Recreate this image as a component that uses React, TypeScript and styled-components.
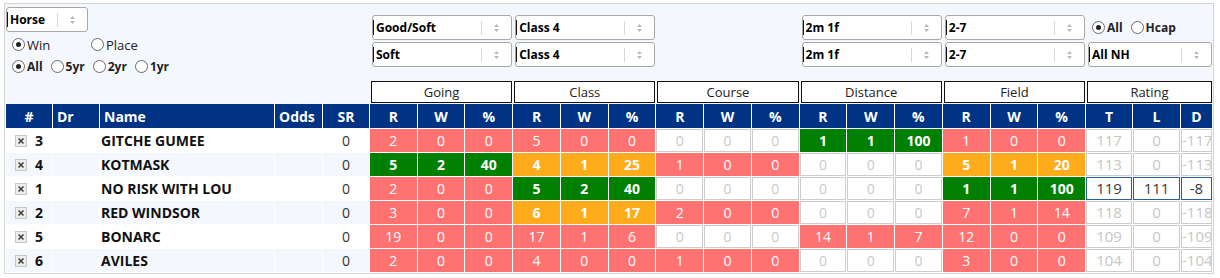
import React from 'react'
import styled, { createGlobalStyle } from 'styled-components'

type Tone = 'red' | 'green' | 'orange' | 'empty'

const GlobalStyle = createGlobalStyle`
  body {
    margin: 0;
    background: #fff;
    font-family: "Open Sans", "Liberation Sans", sans-serif;
  }
`

// shared by the filter strip and the table so the columns line up
const COLS = '46px 46px 174px 47px 46px repeat(15, 1fr) 46px 47px 31px'

const toneBg: Record<Tone, string> = {
  red: '#ff7272',
  green: '#008000',
  orange: '#ffac1c',
  empty: '#ffffff',
}

const toneOf = (r: number, p: number): Tone => {
  if (r === 0) return 'empty'
  if (p >= 40) return 'green'
  if (p >= 15) return 'orange'
  return 'red'
}

const groups = [
  { label: 'Going', col: '6 / 9', top: 'Good/Soft', bottom: 'Soft' },
  { label: 'Class', col: '9 / 12', top: 'Class 4', bottom: 'Class 4' },
  { label: 'Course', col: '12 / 15' },
  { label: 'Distance', col: '15 / 18', top: '2m 1f', bottom: '2m 1f' },
  { label: 'Field', col: '18 / 21', top: '2-7', bottom: '2-7' },
  { label: 'Rating', col: '21 / 24' },
]

const runners = [
  { no: 3, name: 'GITCHE GUMEE', sr: 0, stats: [[2, 0, 0], [5, 0, 0], [0, 0, 0], [1, 1, 100], [1, 0, 0]], rating: [117, 0, -117], active: false },
  { no: 4, name: 'KOTMASK', sr: 0, stats: [[5, 2, 40], [4, 1, 25], [1, 0, 0], [0, 0, 0], [5, 1, 20]], rating: [113, 0, -113], active: false },
  { no: 1, name: 'NO RISK WITH LOU', sr: 0, stats: [[2, 0, 0], [5, 2, 40], [0, 0, 0], [0, 0, 0], [1, 1, 100]], rating: [119, 111, -8], active: true },
  { no: 2, name: 'RED WINDSOR', sr: 0, stats: [[3, 0, 0], [6, 1, 17], [2, 0, 0], [0, 0, 0], [7, 1, 14]], rating: [118, 0, -118], active: false },
  { no: 5, name: 'BONARC', sr: 0, stats: [[19, 0, 0], [17, 1, 6], [0, 0, 0], [14, 1, 7], [12, 0, 0]], rating: [109, 0, -109], active: false },
  { no: 6, name: 'AVILES', sr: 0, stats: [[2, 0, 0], [4, 0, 0], [1, 0, 0], [0, 0, 0], [3, 0, 0]], rating: [104, 0, -104], active: false },
]

const UpDown = () => (
  <svg width="7" height="10" viewBox="0 0 7 10">
    <path d="M1 4 L3.5 1 L6 4 Z M1 6 L3.5 9 L6 6 Z" fill="#b8b8b8" />
  </svg>
)

const CheckX = () => (
  <svg width="12" height="12" viewBox="0 0 12 12">
    <rect x="0.5" y="0.5" width="11" height="11" fill="#ececec" stroke="#c6c6c6" />
    <path d="M3.5 3.5 L8.5 8.5 M8.5 3.5 L3.5 8.5" stroke="#444" strokeWidth="1.6" />
  </svg>
)

const Select = ({ value }: { value: string }) => (
  <SelectBox>
    <SelectValue>{value}</SelectValue>
    <SelectIndicator>
      <UpDown />
    </SelectIndicator>
  </SelectBox>
)

const Radio = ({ label, on, bold, w }: { label: string; on?: boolean; bold?: boolean; w?: number }) => (
  <RadioOption $bold={bold} $w={w}>
    <RadioDot $on={on} />
    {label}
  </RadioOption>
)

const App = () => {
  return (
    <>
      <GlobalStyle />
      <Frame>
        <Filters>
          <LeftPanel>
            <HorseSelect>
              <SelectValue>Horse</SelectValue>
              <SelectIndicator>
                <UpDown />
              </SelectIndicator>
            </HorseSelect>
            <RadioRow $top={4} $gap={0}>
              <Radio label="Win" on w={79} />
              <Radio label="Place" />
            </RadioRow>
            <RadioRow $top={5} $gap={8}>
              <Radio label="All" on bold />
              <Radio label="5yr" bold />
              <Radio label="2yr" bold />
              <Radio label="1yr" bold />
            </RadioRow>
          </LeftPanel>

          {groups.map(g => (
            <React.Fragment key={g.label}>
              {g.top && (
                <Slot $col={g.col} $row={2}>
                  <Select value={g.top} />
                </Slot>
              )}
              {g.bottom && (
                <Slot $col={g.col} $row={4}>
                  <Select value={g.bottom} />
                </Slot>
              )}
              <GroupBox $col={g.col}>{g.label}</GroupBox>
            </React.Fragment>
          ))}

          <Slot $col="21 / 24" $row={2}>
            <RadioRow $top={0} $gap={8} $fill>
              <Radio label="All" on bold />
              <Radio label="Hcap" bold />
            </RadioRow>
          </Slot>
          <Slot $col="21 / 24" $row={4}>
            <Select value="All NH" />
          </Slot>
        </Filters>

        <Table>
          <HeadCell>#</HeadCell>
          <HeadCell $left>Dr</HeadCell>
          <HeadCell $left>Name</HeadCell>
          <HeadCell $left>Odds</HeadCell>
          <HeadCell>SR</HeadCell>
          {groups.slice(0, 5).map(g => (
            <React.Fragment key={g.label}>
              <HeadCell>R</HeadCell>
              <HeadCell>W</HeadCell>
              <HeadCell>%</HeadCell>
            </React.Fragment>
          ))}
          <HeadCell>T</HeadCell>
          <HeadCell>L</HeadCell>
          <HeadCell>D</HeadCell>

          {runners.map((r, i) => {
            const stripe = i % 2 === 1
            return (
              <React.Fragment key={r.no}>
                <InfoCell $stripe={stripe} $align="center">
                  <NoWrap>
                    <CheckX />
                    <b>{r.no}</b>
                  </NoWrap>
                </InfoCell>
                <InfoCell $stripe={stripe} />
                <InfoCell $stripe={stripe} $bold>
                  {r.name}
                </InfoCell>
                <InfoCell $stripe={stripe} />
                <InfoCell $stripe={stripe} $align="center" $muted>
                  {r.sr}
                </InfoCell>
                {r.stats.map((s, gi) => {
                  const tone = toneOf(s[0], s[2])
                  return s.map((v, k) => (
                    <StatCell key={`${gi}-${k}`} $tone={tone}>
                      {v}
                    </StatCell>
                  ))
                })}
                {r.rating.map((v, k) => (
                  <RatingCell key={k} $active={r.active}>
                    {v}
                  </RatingCell>
                ))}
              </React.Fragment>
            )
          })}
        </Table>
      </Frame>
    </>
  )
}

export default App

const Frame = styled.div`
  margin: 3px 0 0 4px;
  width: 1210px;
  box-sizing: border-box;
  border: 1px solid #d4d4d4;
  background: #f4f7fc;
`

const Filters = styled.div`
  display: grid;
  grid-template-columns: ${COLS};
  grid-template-rows: 11px 25px 2px 25px 14px 22px;
  column-gap: 1px;
  padding: 0 1px 1px;
`

const LeftPanel = styled.div`
  grid-column: 1 / 6;
  grid-row: 1 / 6;
  display: flex;
  flex-direction: column;
  align-items: flex-start;
  padding-top: 3px;
`

const Slot = styled.div<{ $col: string; $row: number }>`
  grid-column: ${p => p.$col};
  grid-row: ${p => p.$row};
  min-width: 0;
`

const SelectBox = styled.div`
  display: flex;
  align-items: center;
  height: 25px;
  box-sizing: border-box;
  margin-left: 2px;
  background: #fff;
  border: 1px solid #a8a8a8;
  border-radius: 3px;
`

const HorseSelect = styled(SelectBox)`
  width: 82px;
  margin-left: 0;
`

const SelectValue = styled.span`
  flex: 1;
  min-width: 0;
  border-left: 1px solid #111;
  padding-left: 2px;
  font-size: 12px;
  font-weight: 700;
  line-height: 15px;
  color: #000;
  white-space: nowrap;
  overflow: hidden;
`

const SelectIndicator = styled.span`
  flex: none;
  width: 29px;
  height: 14px;
  display: flex;
  align-items: center;
  justify-content: center;
  border-left: 1px solid #d8d8d8;
`

const RadioRow = styled.div<{ $top: number; $gap: number; $fill?: boolean }>`
  display: flex;
  align-items: center;
  height: ${p => (p.$fill ? '100%' : '17px')};
  margin-top: ${p => p.$top}px;
  padding-left: 6px;
  gap: ${p => p.$gap}px;
`

const RadioOption = styled.label<{ $bold?: boolean; $w?: number }>`
  display: inline-flex;
  align-items: center;
  gap: 2px;
  font-size: ${p => (p.$bold ? 12 : 13)}px;
  font-weight: ${p => (p.$bold ? 700 : 400)};
  color: #222;
  ${p => (p.$w ? `width: ${p.$w}px;` : '')}
`

const RadioDot = styled.span<{ $on?: boolean }>`
  position: relative;
  flex: none;
  width: 13px;
  height: 13px;
  box-sizing: border-box;
  border: 1px solid #6a6a6a;
  border-radius: 50%;
  background: #fff;

  &::after {
    content: '';
    display: ${p => (p.$on ? 'block' : 'none')};
    position: absolute;
    inset: 3px;
    border-radius: 50%;
    background: #222;
  }
`

const GroupBox = styled.div<{ $col: string }>`
  grid-column: ${p => p.$col};
  grid-row: 6;
  margin-left: 1px;
  display: flex;
  align-items: center;
  justify-content: center;
  border: 1px solid #111;
  background: #fff;
  font-size: 13px;
  color: #222;
`

const Table = styled.div`
  display: grid;
  grid-template-columns: ${COLS};
  grid-template-rows: 24px repeat(6, 23px);
  gap: 1px;
  padding: 0 1px 1px;
  background: #fff;
`

const HeadCell = styled.div<{ $left?: boolean }>`
  display: flex;
  align-items: center;
  justify-content: ${p => (p.$left ? 'flex-start' : 'center')};
  padding-left: ${p => (p.$left ? '4px' : '0')};
  background: #003383;
  color: #fff;
  font-size: 14px;
  font-weight: 700;
  white-space: nowrap;
  overflow: hidden;
`

const InfoCell = styled.div<{ $stripe: boolean; $align?: 'center'; $bold?: boolean; $muted?: boolean }>`
  display: flex;
  align-items: center;
  justify-content: ${p => (p.$align === 'center' ? 'center' : 'flex-start')};
  padding-left: ${p => (p.$align === 'center' ? '0' : '1px')};
  background: ${p => (p.$stripe ? '#f4f7fc' : '#fff')};
  font-size: 14px;
  font-weight: ${p => (p.$bold ? 700 : 400)};
  color: ${p => (p.$muted ? '#333' : '#111')};
  white-space: nowrap;
`

const NoWrap = styled.span`
  display: inline-flex;
  align-items: center;
  gap: 8px;
  color: #111;
`

const StatCell = styled.div<{ $tone: Tone }>`
  display: flex;
  align-items: center;
  justify-content: center;
  box-sizing: border-box;
  background: ${p => toneBg[p.$tone]};
  border: 1px solid ${p => (p.$tone === 'empty' ? '#cccccc' : toneBg[p.$tone])};
  color: ${p => (p.$tone === 'empty' ? '#c9c9c9' : '#fff')};
  font-size: 14px;
  font-weight: ${p => (p.$tone === 'green' || p.$tone === 'orange' ? 700 : 400)};
`

const RatingCell = styled.div<{ $active?: boolean }>`
  box-sizing: border-box;
  overflow: hidden;
  white-space: nowrap;
  text-align: center;
  line-height: 21px;
  background: #fff;
  border: 1px solid ${p => (p.$active ? '#2a5d9c' : '#cccccc')};
  color: ${p => (p.$active ? '#3a3a3a' : '#c6c6c6')};
  font-size: 15px;
`
